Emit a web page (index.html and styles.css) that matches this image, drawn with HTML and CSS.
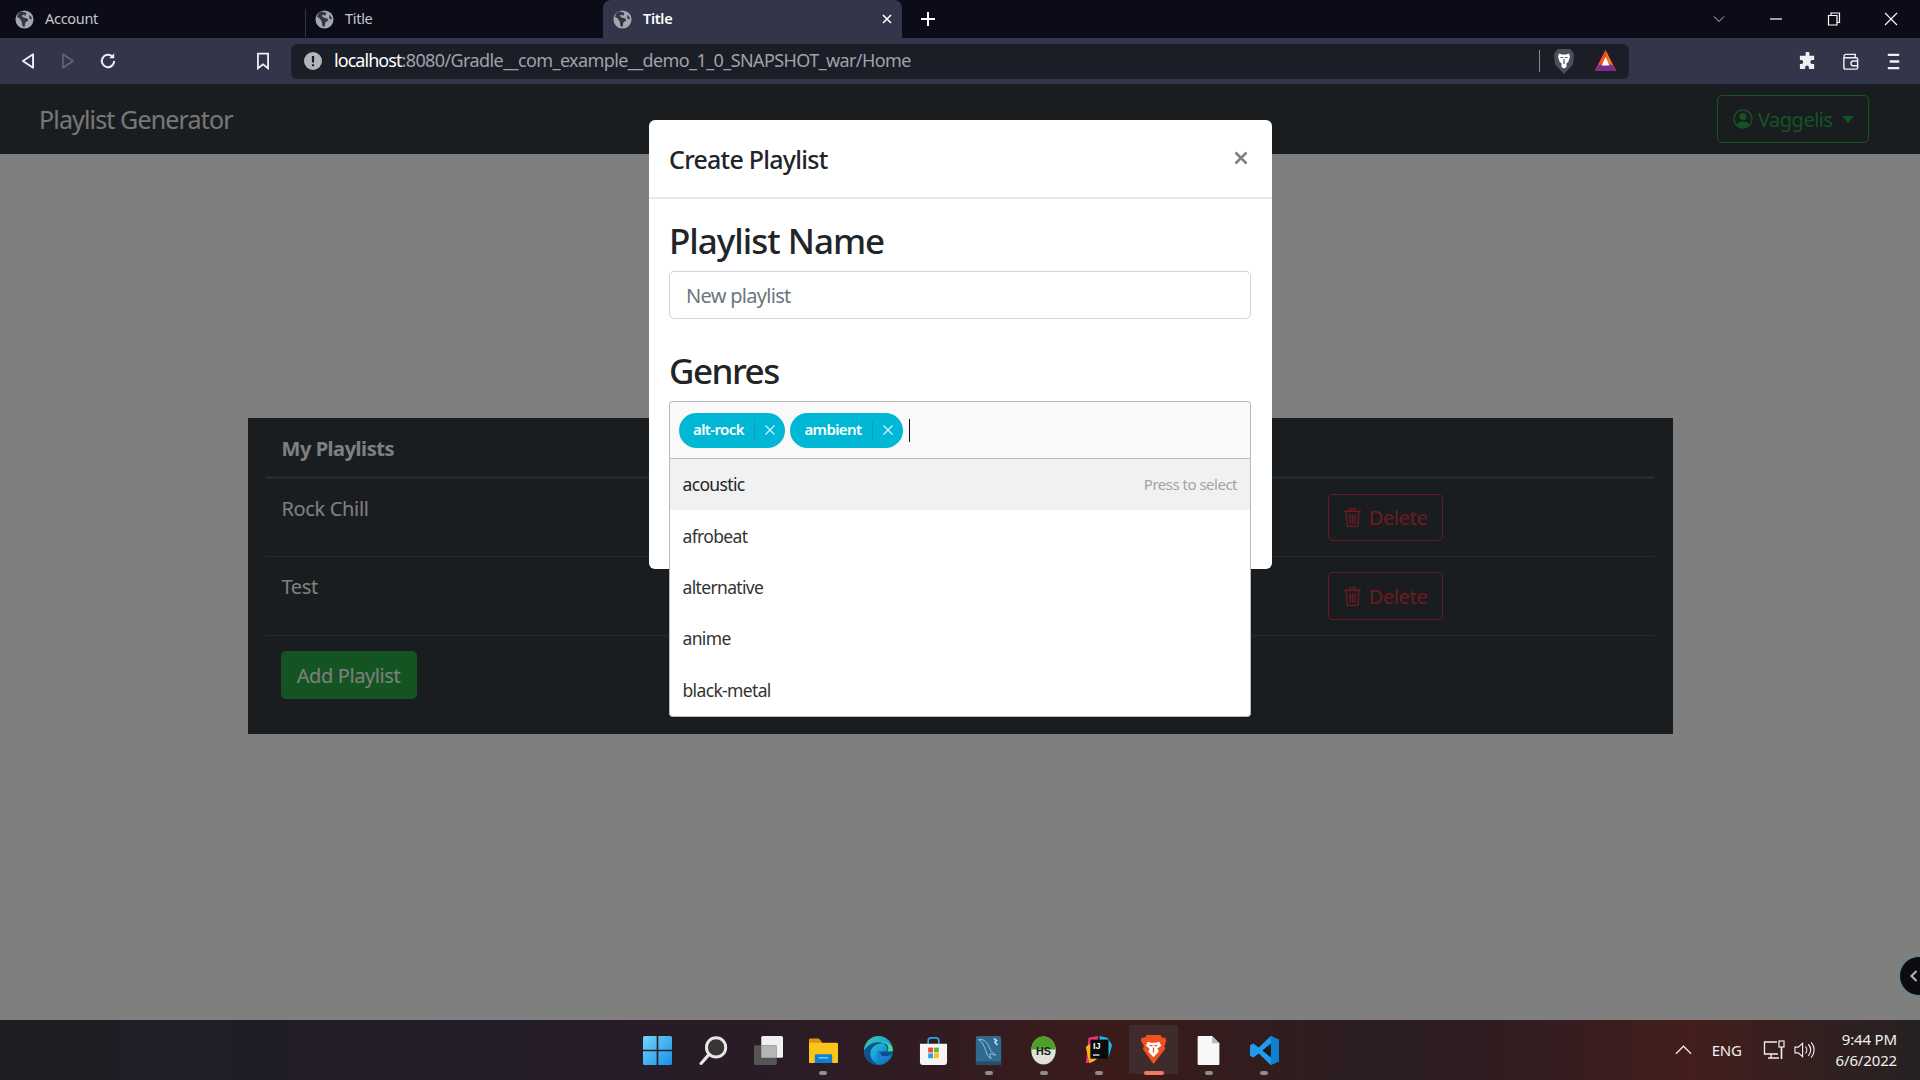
FILE: index.html
```html
<!DOCTYPE html>
<html lang="en">
<head>
    <meta charset="UTF-8">
    <meta name="viewport" content="width=device-width, initial-scale=1.0">
    <title>Playlist Generator</title>
    <link rel="stylesheet" href="styles.css">
</head>
<body>
    <svg class="sprites" width="0" height="0">
        <symbol id="globe" viewBox="0 0 20 20">
            <circle cx="10" cy="10" r="9.5" fill="#a4a7b1"/>
            <path d="M7 1.5 4 3 2 7l3 2 2 3 1 5 2 1 1-5 3-2-1-2-4-1-2-2 2-1 2 1 1-3z" fill="#34363f"/>
            <path d="M15 5l2 2 1 3-3-1z" fill="#34363f"/>
        </symbol>
        <symbol id="trash" viewBox="0 0 18 20">
            <path d="M1 4h16M3 4l1 14.500h10L15 4M6.500 4V1.500h5V4M6.500 7l.4 9M9 7v9M11.500 7l-.4 9" fill="none" stroke="currentColor" stroke-width="1.300"/>
        </symbol>
    </svg>

    <!-- browser tabs -->
    <div class="tabstrip">
        <div class="tab">
            <svg class="globe"><use href="#globe"/></svg>
            <span>Account</span>
        </div>
        <div class="tab tab-second">
            <svg class="globe"><use href="#globe"/></svg>
            <span>Title</span>
        </div>
        <div class="tab tab-active">
            <svg class="globe"><use href="#globe"/></svg>
            <span>Title</span>
            <svg class="tab-close" viewBox="0 0 12 12"><path d="M2 2l8 8M10 2l-8 8" stroke="#fff" stroke-width="1.600"/></svg>
        </div>
        <svg class="new-tab" viewBox="0 0 16 16"><path d="M8 1v14M1 8h14" stroke="#fff" stroke-width="2"/></svg>
        <div class="window-controls">
            <svg viewBox="0 0 14 14"><path d="M2 4.500l5 5 5-5" fill="none" stroke="#c9c9cf" stroke-width="1"/></svg>
            <svg viewBox="0 0 14 14"><path d="M1 7h12" stroke="#fff" stroke-width="1.200"/></svg>
            <svg viewBox="0 0 14 14"><path d="M1.500 3.500h8.500v9.500H1.500zM4 3.500V1h8.500v9.500H10" fill="none" stroke="#fff" stroke-width="1.200"/></svg>
            <svg viewBox="0 0 14 14"><path d="M1 1l12 12M13 1L1 13" stroke="#fff" stroke-width="1.100"/></svg>
        </div>
    </div>

    <!-- browser toolbar -->
    <div class="toolbar">
        <div class="tool"><svg viewBox="0 0 16 16"><path d="M12.500 2v12L3.500 8z" fill="none" stroke="#f0f0f4" stroke-width="1.700" stroke-linejoin="round"/></svg></div>
        <div class="tool"><svg viewBox="0 0 16 16"><path d="M3.500 2v12l9-6z" fill="none" stroke="#62646f" stroke-width="1.500" stroke-linejoin="round"/></svg></div>
        <div class="tool"><svg viewBox="0 0 16 16"><path d="M13.500 8a5.500 5.500 0 1 1-1.700-4" fill="none" stroke="#f0f0f4" stroke-width="1.800"/><path d="M13.500 1v4.500H9z" fill="#f0f0f4"/></svg></div>
        <div class="tool tool-bookmark"><svg viewBox="0 0 16 16"><path d="M3.500 1.500h9v13L8 11l-4.500 3.500z" fill="none" stroke="#f0f0f4" stroke-width="1.600"/></svg></div>
        <div class="urlbar">
            <svg class="url-info" viewBox="0 0 18 18"><circle cx="9" cy="9" r="9" fill="#b3b5bc"/><path d="M9 4v6.500M9 12.300v2" stroke="#1b1d27" stroke-width="2.200"/></svg>
            <span class="url-text"><span class="url-host">localhost</span>:8080/Gradle__com_example__demo_1_0_SNAPSHOT_war/Home</span>
            <span class="url-sep"></span>
            <svg class="url-shield" viewBox="0 0 20 26">
                <path d="M3.500 1h13L20 6l-1 10.500L10 26 1 16.500 0 6z" fill="#4b4e5c"/>
                <path d="M5 5.500l3 1h4l3-1 1 3-1.500 5-2 2v3.500L10 20.500 7.500 19v-3.500l-2-2L4 8.500z" fill="#fff"/>
                <path d="M6.500 9.500h2.700M10.800 9.500h2.700M10 11v5" stroke="#4b4e5c" stroke-width="1.200"/>
            </svg>
            <svg class="url-bat" viewBox="0 0 24 24">
                <path d="M12 0l11.500 23H.5z" fill="#e5332a"/>
                <path d="M12 0l11.500 23H15z" fill="#ee7a1f"/>
                <path d="M12 0L.5 23H9z" fill="#f4511e"/>
                <path d="M.5 23l4-7h15l4 7z" fill="#7b2a8f"/>
                <path d="M12 7l4 10H8z" fill="#fff"/>
            </svg>
        </div>
        <div class="tool-group">
            <svg viewBox="0 0 20 20"><path d="M8 1.500a2 2 0 0 1 4 0V4h5v4.500h-2a2 2 0 0 0 0 4h2V18h-5.500v-1.800a2 2 0 0 0-4 0V18H2v-5.500h1.500a2 2 0 0 0 0-4H2V4h6z" fill="#f0f0f4"/></svg>
            <svg viewBox="0 0 20 20"><path d="M3 5.500V16a2 2 0 0 0 2 2h11a1.500 1.500 0 0 0 1.500-1.500v-9A1.500 1.500 0 0 0 16 6H3.500m0-.5A2 2 0 0 1 5 2.500h10v3" fill="none" stroke="#f0f0f4" stroke-width="1.500"/><path d="M18 9.500h-5a2.500 2.500 0 0 0 0 5h5" fill="none" stroke="#f0f0f4" stroke-width="1.500"/></svg>
            <svg viewBox="0 0 20 20"><path d="M4 3h12M6 10h10M4 17h12" stroke="#f0f0f4" stroke-width="2.400"/></svg>
        </div>
    </div>

    <!-- the web page -->
    <div class="page">
        <nav class="navbar">
            <a class="brand">Playlist Generator</a>
            <button class="user-btn">
                <svg class="user-icon" viewBox="0 0 20 20">
                    <circle cx="10" cy="10" r="9" fill="none" stroke="currentColor" stroke-width="1.500"/>
                    <circle cx="10" cy="7.500" r="3.500" fill="currentColor"/>
                    <path d="M3.800 16a6.500 5 0 0 1 12.400 0A9 9 0 0 1 3.800 16z" fill="currentColor"/>
                </svg>
                <span>Vaggelis</span>
                <span class="caret"></span>
            </button>
        </nav>

        <div class="card">
            <div class="table">
                <div class="table-head">My Playlists</div>
                <div class="table-row">
                    <div class="row-name">Rock Chill</div>
                    <div class="row-actions">
                        <button class="btn-delete"><svg class="trash"><use href="#trash"/></svg>Delete</button>
                    </div>
                </div>
                <div class="table-row">
                    <div class="row-name">Test</div>
                    <div class="row-actions">
                        <button class="btn-delete btn-delete-tall"><svg class="trash"><use href="#trash"/></svg>Delete</button>
                    </div>
                </div>
                <button class="btn-add">Add Playlist</button>
            </div>
        </div>

        <div class="backdrop"></div>

        <div class="modal">
            <div class="modal-header">
                <h5>Create Playlist</h5>
                <svg class="modal-close" viewBox="0 0 14 14"><path d="M1.500 1.500l11 11M12.500 1.500l-11 11" stroke="#808080" stroke-width="2.600"/></svg>
            </div>
            <div class="modal-body">
                <h3>Playlist Name</h3>
                <input class="name-input" type="text" placeholder="New playlist">
                <h3 class="genres-title">Genres</h3>
                <div class="select">
                    <div class="select-box">
                        <span class="chip"><span class="chip-label">alt-rock</span><i class="chip-x"><svg viewBox="0 0 12 12"><path d="M1.500 1.500l9 9M10.500 1.500l-9 9" stroke="#d8f4f8" stroke-width="1.100"/></svg></i></span>
                        <span class="chip"><span class="chip-label">ambient</span><i class="chip-x"><svg viewBox="0 0 12 12"><path d="M1.500 1.500l9 9M10.500 1.500l-9 9" stroke="#d8f4f8" stroke-width="1.100"/></svg></i></span>
                        <span class="caret-line"></span>
                    </div>
                    <ul class="options">
                        <li class="option-active">acoustic<small>Press to select</small></li>
                        <li>afrobeat</li>
                        <li>alternative</li>
                        <li>anime</li>
                        <li>black-metal</li>
                    </ul>
                </div>
            </div>
        </div>

        <!-- floating side handle -->
        <div class="side-handle">
            <svg viewBox="0 0 12 16"><path d="M9 2L3 8l6 6" fill="none" stroke="#b5b5b5" stroke-width="2.500"/></svg>
        </div>
    </div>

    <!-- windows taskbar -->
    <div class="taskbar">
        <div></div>
        <div class="task-icons">
            <div class="task-icon"><svg viewBox="0 0 28 28">
                <defs><linearGradient id="win" x1="0" y1="0" x2="1" y2="1"><stop offset="0" stop-color="#6fd6f7"/><stop offset="1" stop-color="#1a8fe8"/></linearGradient></defs>
                <path d="M0 1.500A1.500 1.500 0 0 1 1.500 0h11.700v13.200H0zM14.800 0h11.700A1.500 1.500 0 0 1 28 1.500v11.700H14.800zM0 14.800h13.200V28H1.500A1.500 1.500 0 0 1 0 26.500zM14.800 14.800H28v11.700a1.500 1.500 0 0 1-1.500 1.500H14.800z" fill="url(#win)"/>
            </svg></div>
            <div class="task-icon"><svg viewBox="0 0 28 28"><circle cx="16.500" cy="11" r="9.300" fill="#3a3436" stroke="#e8e8e8" stroke-width="2.800"/><path d="M9.500 18L2 26.500" stroke="#e8e8e8" stroke-width="3" stroke-linecap="round"/></svg></div>
            <div class="task-icon"><svg viewBox="0 0 28 28"><rect x="7" y="0" width="21" height="21" rx="1.500" fill="#f0f0f0"/><rect x="0" y="9" width="22" height="19" rx="1.500" fill="#555"/><rect x="7" y="9" width="15" height="12" fill="#b5b5b5"/></svg></div>
            <div class="task-icon has-dot"><svg viewBox="0 0 30 28"><path d="M0 3a1.500 1.500 0 0 1 1.500-1.500H10l3 3v3H0z" fill="#d9960f"/><path d="M0 6h28.500a1.500 1.500 0 0 1 1.500 1.500V26a1 1 0 0 1-1 1H1a1 1 0 0 1-1-1z" fill="#fcc419"/><path d="M6 19.500a1.500 1.500 0 0 1 1.500-1.500h15a1.500 1.500 0 0 1 1.500 1.500V27H6z" fill="#0f7fd4"/><path d="M10 21.500h10" stroke="#7cc8f5" stroke-width="1.500"/></svg></div>
            <div class="task-icon"><svg viewBox="0 0 30 30">
                <defs><linearGradient id="edge" x1="0" y1="0" x2="1" y2="1"><stop offset="0" stop-color="#3ad0a0"/><stop offset=".5" stop-color="#1aa5d8"/><stop offset="1" stop-color="#0c59a4"/></linearGradient></defs>
                <circle cx="15" cy="15" r="15" fill="url(#edge)"/>
                <path d="M30 17c0-6-5-9.500-10.500-9.500C12 7.500 6.500 12 6.500 18.500c0 5 4 10 9 11.300C8 30 0 24 0 15 4 9 10 6.500 14 6.500c6 0 10 3 10 7 0 1.500-1 2.500-3 2.500h-7c0 3 3 5 7 5 4 0 7-1.500 9-4z" fill="#0b3f8a" opacity=".85"/>
                <path d="M13.500 16.500c-1 5 3 9.500 8.500 8.500 3-.6 5-2.500 6.500-5-3 2-9 2.500-11-1-.8-1.400-.6-2.500-.6-2.500z" fill="#1c7fd0"/>
                <path d="M30 15c0-5-6-10-13-9 6 1 9 4 8 8-.3 1.300-1 2-2 2h5c1 0 2-.3 2-1z" fill="#4cdb83"/>
            </svg></div>
            <div class="task-icon"><svg viewBox="0 0 28 30"><path d="M8.500 8V5a3 3 0 0 1 3-3h5a3 3 0 0 1 3 3v3" fill="none" stroke="#2aa6e8" stroke-width="1.800"/><path d="M0 8h28v19a3 3 0 0 1-3 3H3a3 3 0 0 1-3-3z" fill="#f5f5f5"/><rect x="8.500" y="12" width="5" height="5" fill="#ea4a2a"/><rect x="14.500" y="12" width="5" height="5" fill="#6cb52d"/><rect x="8.500" y="18" width="5" height="5" fill="#2c9ce8"/><rect x="14.500" y="18" width="5" height="5" fill="#fbbf16"/></svg></div>
            <div class="task-icon has-dot"><svg viewBox="0 0 28 32"><rect width="28" height="32" rx="2" fill="#2f6b91"/><rect y="28" width="28" height="4" fill="#254e6c"/><path d="M3 4c6-1 10 3 12 9 1 4 4 6 7 8-3 0-5-1-6-2-1 2 0 4 1 6-4-2-5-5-6-9C9 11 7 6 3 4z" fill="none" stroke="#a9c6d8" stroke-width="1"/><path d="M20 3l3 2-2 2 3 3" fill="none" stroke="#cfe0ea" stroke-width="1.600"/></svg></div>
            <div class="task-icon has-dot"><svg viewBox="0 0 28 32">
                <ellipse cx="14" cy="16" rx="13.500" ry="15.500" fill="#dfe3d6"/>
                <path d="M.5 15C1 6 7 .5 14 .5S27 6 27.500 15z" fill="#4f9e2a"/>
                <text x="14" y="21" class="hs-text">HS</text>
            </svg></div>
            <div class="task-icon has-dot"><svg viewBox="0 0 30 32">
                <path d="M4 2l10-2 2 10-6 18-9 2z" fill="#f0317e"/>
                <path d="M16 0l9 2 5 8-4 14-8-2z" fill="#20b4e8"/>
                <path d="M1 12l8-6 4 20-8 4z" fill="#fcb514"/>
                <rect x="6" y="4" width="20" height="21" fill="#0a0a0a"/>
                <text x="9" y="14" class="ij-text">IJ</text>
                <path d="M9 21h7" stroke="#fff" stroke-width="1.400"/>
            </svg></div>
            <div class="task-icon task-icon-active"><svg viewBox="0 0 26 30">
                <path d="M6 0h14l2 2.500 3.500.5L26 6l-1 4-1 1 1 3.500L13 30 2 14.500 3 11 0 6l.5-3L4 2.500z" fill="#f1501f"/>
                <path d="M7 7l3.500 1h5L19 7l2 4-4 3 1.500 3L13 23l-5.500-6L9 14l-4-3z" fill="#fff"/>
                <path d="M9 11h3M14 11h3M13 13v5" stroke="#f1501f" stroke-width="1.300"/>
            </svg></div>
            <div class="task-icon has-dot"><svg viewBox="0 0 24 32"><path d="M1 0h15l8 8v23a1 1 0 0 1-1 1H1a1 1 0 0 1-1-1V1a1 1 0 0 1 1-1z" fill="#f8f8f8"/><path d="M16 0l8 8h-8z" fill="#b8b8b8"/></svg></div>
            <div class="task-icon has-dot"><svg viewBox="0 0 30 30"><path d="M21.500 0L30 4v22l-8.500 4L9 18l-5.500 4.300L0 20.500v-11l3.500-1.800L9 12z" fill="#1f9cf0"/><path d="M21.500 8L13 15l8.500 7z" fill="#20232a"/><path d="M21.500 0L30 4v22l-8.500 4z" fill="#0f7fd0"/><path d="M21.500 8v14L13 15z" fill="#1b1d22"/></svg></div>
        </div>
        <div class="tray">
            <svg class="tray-chevron" viewBox="0 0 18 10"><path d="M1 9l8-8 8 8" fill="none" stroke="#f0f0f0" stroke-width="1.300"/></svg>
            <span class="tray-lang">ENG</span>
            <svg class="tray-net" viewBox="0 0 22 20"><path d="M14 2H1.500v12H15M5 18h11M8 14v4" fill="none" stroke="#f0f0f0" stroke-width="1.300"/><rect x="16" y="1" width="5" height="6" fill="none" stroke="#f0f0f0" stroke-width="1.200"/><path d="M18.500 7v12" stroke="#f0f0f0" stroke-width="1.600"/></svg>
            <svg class="tray-sound" viewBox="0 0 22 20"><path d="M1 7h3.500L9 3v14l-4.500-4H1z" fill="none" stroke="#f0f0f0" stroke-width="1.200"/><path d="M12 6.500a5 5 0 0 1 0 7M15 4a8.500 8.500 0 0 1 0 12M18 2a12 12 0 0 1 0 16" fill="none" stroke="#f0f0f0" stroke-width="1.200"/></svg>
            <div class="clock"><span>9:44 PM</span><span>6/6/2022</span></div>
        </div>
    </div>
</body>
</html>
```
FILE: styles.css
```css
html, body {
    height: 100%;
}
body {
    margin: 0;
    display: flex;
    flex-direction: column;
    height: 1080px;
    overflow: hidden;
    font-family: "Noto Sans", "Open Sans", sans-serif;
    color: #212529;
    background: #fff;
}
.sprites {
    position: absolute;
}
h3, h5 {
    margin: 0;
    font-weight: 500;
}
button {
    font-family: inherit;
}

/* browser tabs */
.tabstrip {
    display: flex;
    align-items: center;
    height: 38px;
    flex: none;
    background: #0b0c17;
    color: #c6c7cc;
    font-size: 14.500px;
}
.tab {
    display: flex;
    align-items: center;
    gap: 11px;
    box-sizing: border-box;
    width: 305px;
    height: 100%;
    padding-left: 15px;
    letter-spacing: -0.3px;
}
.tab span {
    padding-bottom: 2px;
}
.tab-second {
    position: relative;
    width: 298px;
    padding-left: 10px;
}
.tab-second::before {
    content: "";
    position: absolute;
    top: 9px;
    bottom: 1px;
    left: 0;
    width: 1px;
    background: #33343d;
}
.tab-active {
    position: relative;
    width: 299px;
    padding-left: 10px;
    color: #fff;
    font-weight: 600;
    background: #33364a;
    border-radius: 8px 8px 0 0;
}
.globe {
    width: 19px;
    height: 19px;
    flex: none;
}
.tab-close {
    width: 12px;
    height: 12px;
    margin-left: auto;
    margin-right: 9px;
}
.new-tab {
    width: 16px;
    height: 16px;
    margin-left: 18px;
}
.window-controls {
    display: flex;
    align-items: center;
    gap: 43.500px;
    margin-left: auto;
    margin-right: 22px;
}
.window-controls svg {
    width: 14px;
    height: 14px;
}

/* browser toolbar */
.toolbar {
    display: flex;
    align-items: center;
    height: 46px;
    flex: none;
    padding-left: 8px;
    background: #33364a;
}
.tool {
    display: flex;
    justify-content: center;
    width: 40px;
}
.tool svg {
    width: 18px;
    height: 18px;
}
.tool-bookmark {
    margin-left: 115px;
}
.urlbar {
    display: flex;
    align-items: center;
    box-sizing: border-box;
    width: 1338px;
    height: 35px;
    margin-left: 8px;
    padding-left: 13px;
    background: #1b1d27;
    border-radius: 6px;
    font-size: 18px;
    color: #a0a2aa;
}
.url-info {
    width: 18px;
    height: 18px;
    flex: none;
}
.url-text {
    margin-left: 12px;
    padding-bottom: 2px;
    letter-spacing: -0.6px;
    white-space: nowrap;
}
.url-host {
    color: #fff;
    letter-spacing: -0.95px;
}
.url-sep {
    width: 1px;
    height: 22px;
    margin-left: auto;
    background: #8a8c94;
}
.url-shield {
    width: 20px;
    height: 26px;
    margin-left: 14px;
}
.url-bat {
    width: 23px;
    height: 22px;
    margin-left: 20px;
    margin-right: 12px;
}
.tool-group {
    display: flex;
    align-items: center;
    gap: 24px;
    margin-left: 169px;
}
.tool-group svg {
    width: 19px;
    height: 19px;
}

/* page under the modal */
.page {
    position: relative;
    flex: 1;
    min-height: 0;
    background: #fff;
    overflow: hidden;
}
.navbar {
    display: flex;
    align-items: center;
    justify-content: space-between;
    height: 70px;
    padding: 0 51px 0 39px;
    background: #343a40;
}
.brand {
    font-size: 25px;
    color: #eee;
    letter-spacing: -0.85px;
}
.user-btn {
    display: flex;
    align-items: center;
    box-sizing: border-box;
    width: 152px;
    height: 48px;
    padding: 0 14px 0 15px;
    background: transparent;
    border: 1px solid #28a745;
    border-radius: 5px;
    color: #28a745;
    font-size: 20px;
    letter-spacing: -0.5px;
}
.user-icon {
    width: 20px;
    height: 20px;
    margin-right: 5px;
}
.caret {
    width: 0;
    height: 0;
    margin-left: auto;
    border-left: 6px solid transparent;
    border-right: 6px solid transparent;
    border-top: 7px solid #28a745;
}
.card {
    box-sizing: border-box;
    width: 1425px;
    height: 316px;
    margin: 264px auto 0;
    padding: 0 19px 0 18px;
    background: #343a40;
    color: #fff;
    font-size: 20px;
}
.table-head {
    box-sizing: border-box;
    height: 61px;
    padding: 15px 16px 0;
    line-height: 32px;
    font-weight: 700;
    border-bottom: 3px solid #4b545c;
    letter-spacing: -0.45px;
}
.table-row {
    display: flex;
    padding: 15px 15px 15px 16px;
    border-bottom: 1px solid #4b545c;
}
.row-name {
    flex: 1;
    line-height: 30px;
    letter-spacing: -0.35px;
}
.row-actions {
    width: 311px;
}
.btn-delete {
    display: flex;
    align-items: center;
    justify-content: center;
    gap: 7px;
    box-sizing: border-box;
    width: 115px;
    height: 47px;
    padding: 0;
    background: transparent;
    border: 1px solid #dc3545;
    border-radius: 5px;
    color: #dc3545;
    font-size: 20px;
    letter-spacing: -0.35px;
}
.btn-delete-tall {
    height: 48px;
}
.trash {
    width: 19px;
    height: 21px;
}
.btn-add {
    display: block;
    width: 136px;
    height: 48px;
    margin: 15px 0 0 15px;
    padding: 0;
    background: #28a745;
    border: none;
    border-radius: 5px;
    color: #fff;
    font-size: 20px;
    letter-spacing: -0.4px;
}

/* dims everything in the page */
.backdrop {
    position: absolute;
    inset: 0;
    background: rgba(0, 0, 0, 0.5);
}

/* modal */
.modal {
    position: absolute;
    top: 36px;
    left: 649px;
    width: 623px;
    height: 449px;
    box-sizing: border-box;
    background: #fff;
    border-radius: 6px;
}
.modal-header {
    display: flex;
    align-items: center;
    justify-content: space-between;
    box-sizing: border-box;
    height: 79px;
    padding: 0 21px 4px 20px;
    border-bottom: 2px solid #e6e8eb;
}
.modal-header h5 {
    font-size: 25px;
    line-height: 38px;
    margin-top: 4px;
    letter-spacing: -0.75px;
}
.modal-close {
    width: 14px;
    height: 14px;
    margin: 0 3px 0 0;
    position: relative;
    top: 1px;
}
.modal-body {
    padding: 21px 21px 0 20px;
}
.modal-body h3 {
    font-size: 35px;
    line-height: 42px;
    letter-spacing: -1px;
}
.name-input {
    display: block;
    box-sizing: border-box;
    width: 100%;
    height: 48px;
    margin-top: 9px;
    padding: 0 16px;
    border: 1px solid #ced4da;
    border-radius: 5px;
    font-family: inherit;
    font-size: 20px;
    letter-spacing: -0.7px;
}
.name-input::placeholder {
    color: #6c757d;
    opacity: 1;
}
.modal-body .genres-title {
    margin-top: 31px;
    letter-spacing: -1.5px;
}
.select {
    position: relative;
    margin-top: 9px;
    font-size: 17.500px;
}
.select-box {
    display: flex;
    align-items: center;
    gap: 5px;
    box-sizing: border-box;
    height: 58px;
    padding-left: 9px;
    background: #f9f9f9;
    border: 1px solid #b8b8b8;
    border-radius: 3px 3px 0 0;
}
.chip {
    display: flex;
    align-items: center;
    height: 35px;
    padding-left: 14px;
    background: #00b8d6;
    border-radius: 18px;
    color: #fff;
    font-size: 15px;
    font-weight: 600;
    letter-spacing: -0.6px;
}
.chip-label {
    padding-bottom: 2px;
}
.chip-x {
    display: flex;
    align-items: center;
    justify-content: center;
    width: 30px;
    height: 21px;
    margin-left: 10.500px;
    border-left: 1px solid #11a0b8;
}
.chip-x svg {
    width: 12px;
    height: 12px;
}
.caret-line {
    width: 1px;
    height: 23px;
    margin-left: 1px;
    background: #111;
}
.options {
    position: absolute;
    top: 58px;
    left: 0;
    right: 0;
    margin: 0;
    padding: 0;
    list-style: none;
    background: #fff;
    border: 1px solid #b8b8b8;
    border-top: none;
    border-radius: 0 0 4px 4px;
}
.options li {
    display: flex;
    align-items: center;
    justify-content: space-between;
    box-sizing: border-box;
    height: 51.400px;
    padding: 0 13px 1px 12.500px;
    color: #333;
    letter-spacing: -0.65px;
}
.options .option-active {
    background: #f1f1f1;
    color: #212529;
}
.options small {
    font-size: 15px;
    color: #a3a3a3;
    letter-spacing: -0.5px;
}
.side-handle {
    position: absolute;
    top: 872px;
    left: 1899px;
    display: flex;
    align-items: center;
    box-sizing: border-box;
    width: 40px;
    height: 40px;
    padding-left: 9px;
    background: #0c0c0e;
    border: 1px solid #5a8aa0;
    border-radius: 50%;
}
.side-handle svg {
    width: 10px;
    height: 14px;
}

/* taskbar */
.taskbar {
    display: grid;
    grid-template-columns: 1fr auto 1fr;
    align-items: center;
    height: 60px;
    flex: none;
    background: linear-gradient(90deg, #1e1e24 0, #231c28 25%, #2b1c26 42%, #3b1b1a 58%, #2a1e22 72%, #331c20 80%, #431e1c 88%, #252122 100%);
    color: #f0f0f0;
}
.task-icons {
    display: flex;
    padding-left: 2px;
}
.task-icon {
    position: relative;
    display: flex;
    align-items: center;
    justify-content: center;
    width: 55.100px;
    height: 60px;
}
.task-icon svg {
    width: 29px;
    height: 29px;
}
.task-icon.has-dot::after {
    content: "";
    position: absolute;
    bottom: 5px;
    left: 50%;
    width: 8px;
    height: 4px;
    margin-left: -4px;
    background: #8e8e8e;
    border-radius: 2px;
}
.task-icon-active {
    background: #3f2b2b;
    background-clip: content-box;
    padding: 5px 3px 6px;
    box-sizing: border-box;
    border-radius: 6px;
}
.task-icon-active::after {
    content: "";
    position: absolute;
    bottom: 5px;
    left: 50%;
    width: 20px;
    height: 4px;
    margin-left: -10px;
    background: #f07a63;
    border-radius: 2px;
}
.hs-text, .ij-text {
    font-family: "Liberation Sans", sans-serif;
    font-weight: 700;
}
.hs-text {
    font-size: 12px;
    text-anchor: middle;
    fill: #1c1c1c;
}
.ij-text {
    font-size: 10px;
    fill: #fff;
}
.tray {
    display: flex;
    align-items: center;
    justify-self: end;
    padding-right: 23px;
}
.tray-chevron {
    width: 17px;
    height: 10px;
}
.tray-lang {
    margin-left: 20px;
    font-size: 15px;
    letter-spacing: -0.3px;
}
.tray-net {
    width: 22px;
    height: 20px;
    margin-left: 21px;
}
.tray-sound {
    width: 21px;
    height: 20px;
    margin-left: 9px;
}
.clock {
    display: flex;
    flex-direction: column;
    align-items: flex-end;
    margin-left: 21px;
    font-size: 15px;
    line-height: 21px;
    letter-spacing: -0.15px;
}
```
